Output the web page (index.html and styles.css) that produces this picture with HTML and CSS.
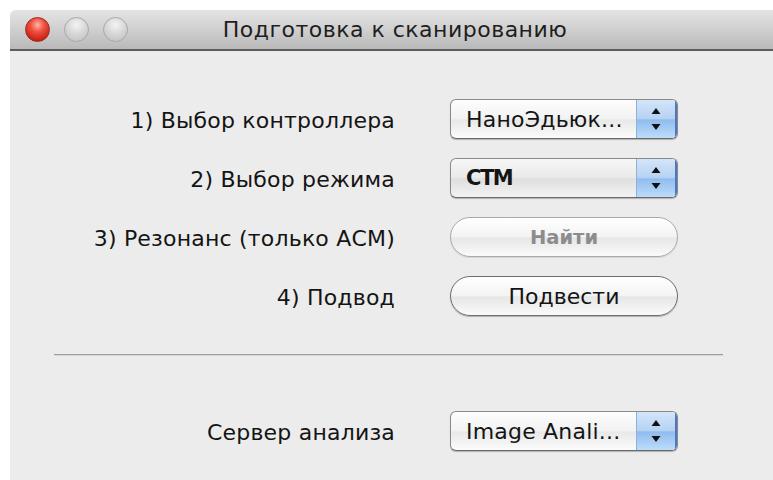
FILE: index.html
```html
<!DOCTYPE html>
<html lang="ru">
<head>
<meta charset="utf-8">
<title>Подготовка к сканированию</title>
<link rel="stylesheet" href="styles.css">
</head>
<body>
<div class="window">
  <div class="titlebar">
    <div class="lights">
      <span class="light light-close"></span>
      <span class="light light-off"></span>
      <span class="light light-off"></span>
    </div>
    <div class="title">Подготовка к сканированию</div>
  </div>
  <div class="content">
    <div class="form">
      <div class="label">1) Выбор контроллера</div>
      <div class="popup">
        <span class="popup-value">НаноЭдьюк...</span>
        <span class="popup-arrows"><svg width="10" height="22" viewBox="0 0 10 22"><path d="M5 0 L9.5 6 L0.5 6 Z M5 22 L9.5 16 L0.5 16 Z" fill="#111"/></svg></span>
      </div>

      <div class="label">2) Выбор режима</div>
      <div class="popup popup-focus">
        <span class="popup-value bold">СТМ</span>
        <span class="popup-arrows"><svg width="10" height="22" viewBox="0 0 10 22"><path d="M5 0 L9.5 6 L0.5 6 Z M5 22 L9.5 16 L0.5 16 Z" fill="#111"/></svg></span>
      </div>

      <div class="label">3) Резонанс (только АСМ)</div>
      <div class="button disabled">Найти</div>

      <div class="label">4) Подвод</div>
      <div class="button">Подвести</div>
    </div>

    <div class="separator"></div>

    <div class="form form-bottom">
      <div class="label">Сервер анализа</div>
      <div class="popup">
        <span class="popup-value">Image Anali...</span>
        <span class="popup-arrows"><svg width="10" height="22" viewBox="0 0 10 22"><path d="M5 0 L9.5 6 L0.5 6 Z M5 22 L9.5 16 L0.5 16 Z" fill="#111"/></svg></span>
      </div>
    </div>
  </div>
</div>
</body>
</html>
```

FILE: styles.css
```css
html, body {
  margin: 0;
  padding: 0;
  background: #ffffff;
  overflow: hidden;
  width: 773px;
  height: 480px;
}

body {
  font-family: "DejaVu Sans", "Liberation Sans", sans-serif;
  color: #141414;
}

.window {
  margin: 10px 0 0 10px;
  width: 770px;
  height: 470px;
  display: flex;
  flex-direction: column;
  background: #ececec;
  border-radius: 6px 6px 0 0;
  overflow: hidden;
}

/* title bar */
.titlebar {
  height: 39px;
  flex: none;
  display: flex;
  align-items: center;
  position: relative;
  background: linear-gradient(#e4e4e4, #cfcfcf 50%, #b9b9b9);
  border-bottom: 2px solid #5c5c5c;
}

.lights {
  display: flex;
  gap: 14px;
  padding-left: 15px;
  position: relative;
  z-index: 1;
}

.light {
  width: 25px;
  height: 25px;
  border-radius: 50%;
  box-sizing: border-box;
}

.light-close {
  background: radial-gradient(circle at 50% 30%, #ffb3a8 0%, #f0513f 35%, #c51d10 80%, #a4150a 100%);
  border: 1px solid #9c2a20;
}

.light-off {
  background: radial-gradient(circle at 50% 30%, #f4f4f4 0%, #d8d8d8 45%, #bdbdbd 100%);
  border: 1px solid #a8a8a8;
}

.title {
  position: absolute;
  left: 0;
  right: 0;
  top: 0;
  bottom: 0;
  display: flex;
  align-items: center;
  justify-content: center;
  font-size: 22px;
  letter-spacing: 0.5px;
  color: #1e1e1e;
}

/* body of the dialog */
.content {
  flex: 1;
  padding-top: 48px;
  display: flex;
  flex-direction: column;
}

.form {
  display: grid;
  grid-template-columns: 385px 228px;
  column-gap: 55px;
  row-gap: 19px;
  align-items: center;
}

.form-bottom {
  margin-top: 55px;
}

.label {
  justify-self: end;
  font-size: 22px;
  letter-spacing: 0.2px;
  color: #141414;
  white-space: nowrap;
  padding-top: 3px;
}

/* pop-up menus */
.popup {
  height: 40px;
  box-sizing: border-box;
  display: flex;
  align-items: stretch;
  border: 1px solid #8a8a8a;
  border-bottom-color: #6a6a6a;
  border-radius: 6px;
  background: linear-gradient(#fdfdfd, #f2f2f2 50%, #e8e8e8 52%, #fbfbfb);
  box-shadow: 0 1px 1px rgba(0, 0, 0, 0.25);
  overflow: hidden;
}

.popup-focus {
  background: linear-gradient(#f7f7f7, #e9e9e9 50%, #dedede 52%, #f3f3f3);
}

.popup-value {
  flex: 1;
  display: flex;
  align-items: center;
  padding-left: 15px;
  font-size: 22px;
  letter-spacing: 0.2px;
  color: #141414;
  white-space: nowrap;
}

.popup-value.bold {
  font-weight: bold;
  font-size: 21px;
  letter-spacing: -1.5px;
}

.popup-arrows {
  width: 38px;
  flex: none;
  display: flex;
  align-items: center;
  justify-content: center;
  border-left: 1px solid #8fb0d8;
  border-right: 2px solid #4f74c2;
  background: linear-gradient(#d4e5f8, #b5d2f3 50%, #8fbcef 52%, #bcdcfb);
}

.separator {
  margin: 38px 0 0 44px;
  width: 669px;
  height: 1px;
  background: #9e9e9e;
  border-bottom: 1px solid #d8d8d8;
}

/* push buttons */
.button {
  height: 40px;
  box-sizing: border-box;
  display: flex;
  align-items: center;
  justify-content: center;
  border: 1px solid #6e6e6e;
  border-radius: 20px;
  background: linear-gradient(#ffffff, #f3f3f3 50%, #e6e6e6 52%, #fafafa);
  box-shadow: 0 1px 1px rgba(0, 0, 0, 0.25);
  font-size: 22px;
  color: #141414;
}

.button.disabled {
  border-color: #a9a9a9;
  color: #8c8c8c;
  font-weight: bold;
  font-size: 19.5px;
  box-shadow: 0 1px 1px rgba(0, 0, 0, 0.1);
}
```
